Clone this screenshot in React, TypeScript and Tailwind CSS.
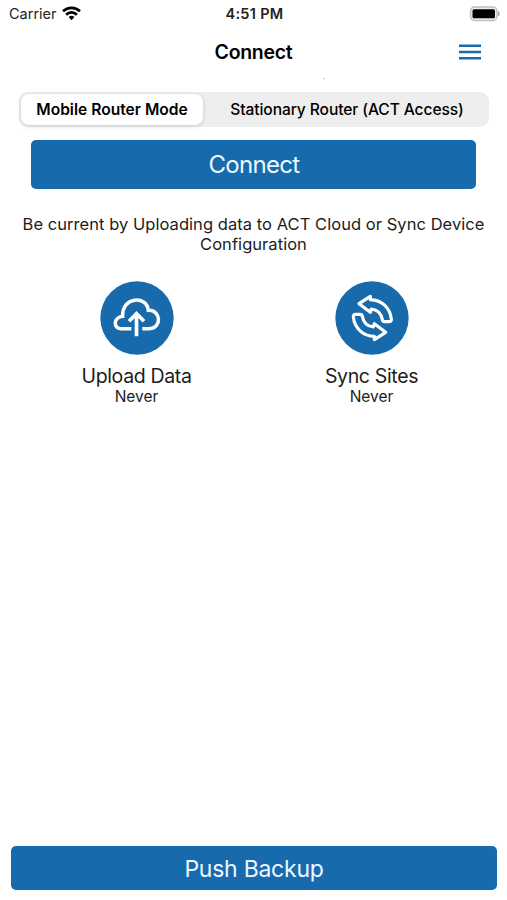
import { useState, type ReactNode } from 'react';

const MODES = [
  { id: 'mobile', label: 'Mobile Router Mode', width: 'w-[182px]', text: 'font-semibold text-[15.6px]' },
  { id: 'stationary', label: 'Stationary Router (ACT Access)', width: 'flex-1 pl-[4px]', text: 'font-medium text-[15.6px] tracking-[-0.1px]' },
];

export default function App() {
  const [mode, setMode] = useState('mobile');

  return (
    <div className="flex h-[900px] w-[507px] flex-col overflow-hidden bg-white font-['Inter','Liberation_Sans',sans-serif] text-[#1c1c1c]">
      <StatusBar />

      {/* Nav bar */}
      <header className="relative grid h-[52px] shrink-0 grid-cols-3 items-center pr-[26px]">
        <h1 className="col-start-2 pl-[26px] text-center text-[19.5px] font-semibold tracking-[-0.3px] text-black">Connect</h1>
        <button aria-label="Menu" className="mb-[2px] justify-self-end">
          <MenuIcon />
        </button>
        <span className="absolute top-[51px] left-[323px] h-px w-[2px] bg-[#c8c8c8]" />
      </header>

      {/* Mode switch */}
      <div className="mt-[13px] ml-[19px] flex h-[35px] w-[470px] shrink-0 rounded-[9px] bg-[#eeeeef] p-[2px]">
        {MODES.map((m) => (
          <button
            key={m.id}
            onClick={() => setMode(m.id)}
            className={`${m.width} ${m.text} rounded-[8px] whitespace-nowrap text-black ${
              mode === m.id ? 'bg-white shadow-[0_1px_4px_rgba(0,0,0,0.16)]' : ''
            }`}
          >
            {m.label}
          </button>
        ))}
      </div>

      <button className="mt-[13px] ml-[31px] h-[49px] w-[445px] shrink-0 rounded-[5px] bg-[#176bac] pl-px text-[24px] tracking-[-0.7px] text-[#eef7ff]">
        Connect
      </button>

      <p className="mt-[25px] text-center text-[16.5px] leading-[20px] tracking-[0.05px]">
        Be current by Uploading data to ACT Cloud or Sync Device
        <br />
        Configuration
      </p>

      <div className="mt-[27px] ml-[19px] grid w-[470px] grid-cols-2">
        <Action label="Upload Data" last="Never">
          <UploadIcon />
        </Action>
        <Action label="Sync Sites" last="Never">
          <SyncIcon />
        </Action>
      </div>

      <button className="mt-auto mb-[10px] ml-[11px] h-[44px] w-[486px] shrink-0 rounded-[5px] bg-[#176bac] pt-[2px] text-[23px] tracking-[-0.25px] text-[#eef7ff]">
        Push Backup
      </button>
    </div>
  );
}

function StatusBar() {
  return (
    <div className="grid h-[27px] shrink-0 grid-cols-3 items-center pr-[7px] pl-[9px] text-[14.5px] text-[#222]">
      <div className="flex items-center gap-[5px]">
        <span>Carrier</span>
        <svg width="19" height="15" viewBox="0 0 19 15" fill="none" stroke="#000" strokeWidth="2.7">
          <path d="M1 5.3C5.8.7 13.2.7 18 5.3" />
          <path d="M4.1 8.7C7.2 5.7 11.8 5.7 14.9 8.7" />
          <path d="M9.5 14.2 6.6 11.1Q9.5 8.6 12.4 11.1Z" fill="#000" stroke="none" />
        </svg>
      </div>
      <span className="text-center font-semibold tracking-[0.3px]">4:51 PM</span>
      <svg className="justify-self-end" width="31" height="16" viewBox="0 0 31 16">
        <rect x="1.5" y="1" width="26.5" height="13.5" rx="4" fill="#eee" stroke="#c0c0c0" strokeWidth="1.5" />
        <rect x="3.5" y="3.2" width="22.5" height="9" rx="1.5" fill="#000" />
        <path d="M29.5 5.5Q31 7.8 29.5 10Z" fill="#aaa" stroke="#aaa" />
      </svg>
    </div>
  );
}

function Action({ label, last, children }: { label: string; last: string; children: ReactNode }) {
  return (
    <button className="flex flex-col items-center">
      {children}
      <span className="mt-[10px] text-[19.5px] leading-[23px] tracking-[-0.35px]">{label}</span>
      <span className="text-[15.5px] leading-[17px]">{last}</span>
    </button>
  );
}

/* ------- icons ------- */

function MenuIcon() {
  return (
    <svg width="22" height="16" viewBox="0 0 22 16" stroke="#176bac" strokeWidth="2.4">
      <path d="M0 1.8h22M0 8h22M0 14.2h22" />
    </svg>
  );
}

function UploadIcon() {
  return (
    <svg width="74" height="74" viewBox="90 33 222 222" fill="none" stroke="#fff" strokeWidth="10.5">
      <circle cx="201" cy="144" r="110" fill="#176bac" stroke="none" />
      <path d="M184 176H152C130 176 129 142 158 139C155 80 230 75 235 121C274 119 276 176 238 176H217" />
      <path d="M199.5 199V132M177 154L199.5 131L222 154" strokeWidth="11" />
    </svg>
  );
}

function SyncIcon() {
  const arrow = 'M175 101L209 79V89C243 90 268 113 272 147Q273 155 265 155H252Q246 155 245 149C242 131 230 119 212 117L209 127Z';
  return (
    <svg width="74" height="74" viewBox="103 33 222 222" fill="none" stroke="#fff" strokeWidth="9.5" strokeLinejoin="round">
      <circle cx="214" cy="144" r="110" fill="#176bac" stroke="none" />
      <path d={arrow} />
      <path d={arrow} transform="rotate(180 215 144)" />
    </svg>
  );
}
